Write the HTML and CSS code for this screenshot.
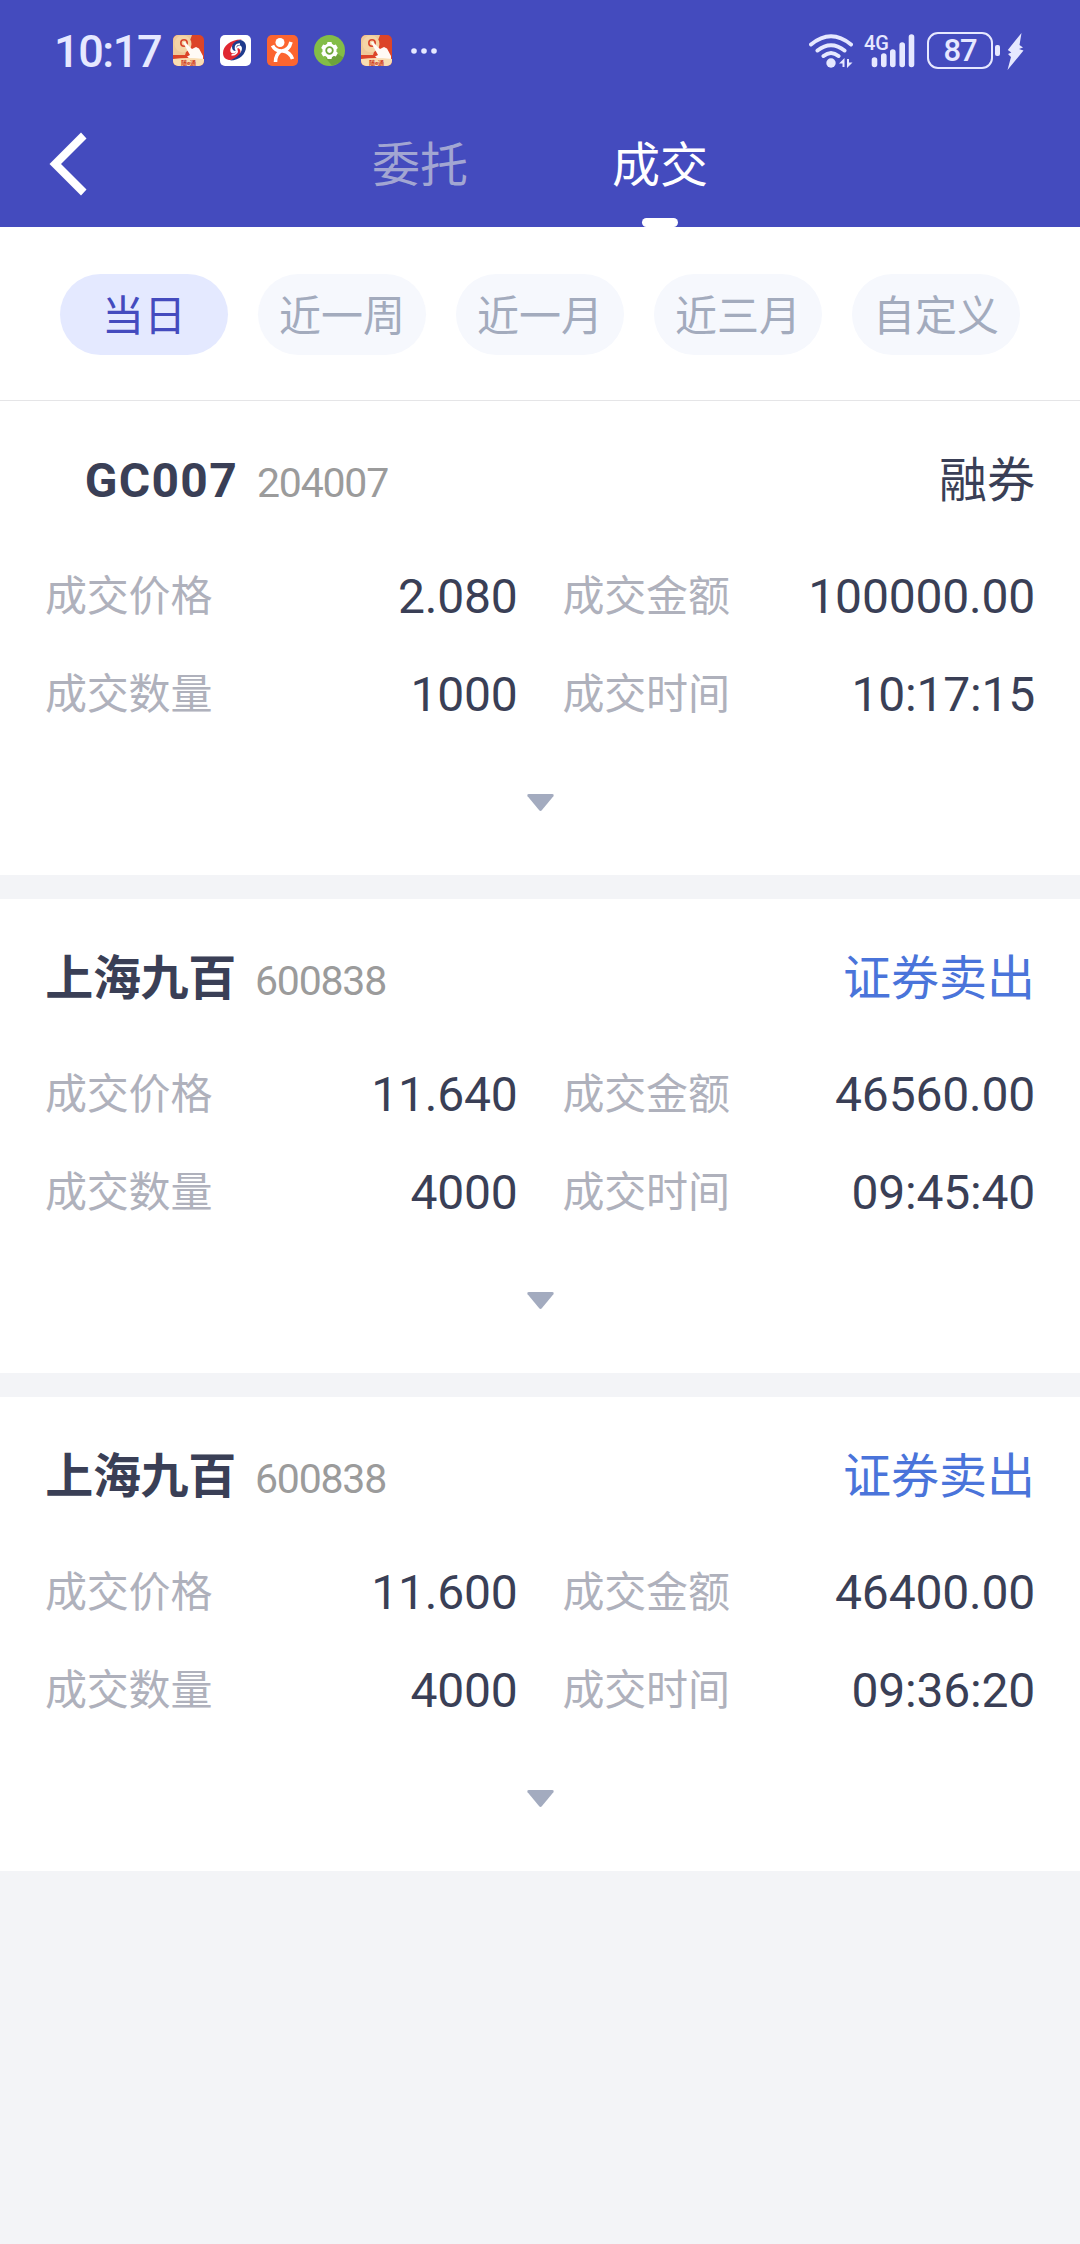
FILE: index.html
```html
<!DOCTYPE html>
<html lang="zh-CN">
<head>
  <meta charset="UTF-8" />
  <meta name="viewport" content="width=device-width, initial-scale=1.0" />
  <title>成交</title>
  <link rel="stylesheet" href="styles.css">
</head>
<body>
  <header class="header">
    <div class="status">
      <span class="time">10:17</span>
      <div class="apps">
        <svg width="31" height="31" viewBox="0 0 31 31">
          <g id="app-fund">
            <rect width="31" height="31" rx="5" fill="#dc4428" />
            <path d="M0 5a5 5 0 0 1 5-5h14l-3 8-4 12H0z" fill="#efc999" />
            <circle cx="10" cy="9" r="8.500" fill="#f4d4a6" />
            <circle cx="11" cy="8" r="3.200" fill="none" stroke="#d8452c" stroke-width="1.600" />
            <path d="M10 7.500q1.500-1.500 3 .5l6 6 4-2 3 1.500 4 7.500v3H17l-3-2.500 3-1.500z" fill="#fffaf5" />
            <path d="M0 24q15-2 31 0v2a5 5 0 0 1-5 5H5a5 5 0 0 1-5-5z" fill="#f9ddb2" />
            <text x="15.500" y="29.800" text-anchor="middle" font-size="6" font-weight="700" fill="#cf3f28">随e通</text>
          </g>
        </svg>
        <svg width="31" height="31" viewBox="0 0 31 31">
          <rect width="31" height="31" rx="5" fill="#fff" />
          <path d="M22 4.500C11 4 3 11 3 18c0 4.500 3 7 7.500 7 6 0 10-4 10-8 0-2.500-1.500-4-3-4 .5 4-3.500 6.500-6 5-3.500-3 1-10.500 10.500-13.500z" fill="#e02731" />
          <path d="M10 25.500c10 0 16-7 16-13.500 0-4-2-6.500-6-7-5 1-8 4-8 7 0 2.500 1.500 4 3.500 4 0-4 3-6.500 5.500-5 3 3-1 10.500-11 14.500z" fill="#1f3b8c" />
          <path d="M20 9c-5.500 0-5 4.500-3.500 6s0 5-5 5" fill="none" stroke="#fff" stroke-width="1.600" />
        </svg>
        <svg width="31" height="31" viewBox="0 0 31 31">
          <rect width="31" height="31" rx="5" fill="#fc6530" />
          <circle cx="13" cy="7.500" r="4.500" fill="#fff" />
          <path d="M5.500 10.500q2.500 5.500 9 5.500 7.500-.5 9.500-9M8.500 27q0-8 6-11.500M16 16q7 1 9.500 8" fill="none" stroke="#fff" stroke-width="3.600" />
        </svg>
        <svg width="31" height="31" viewBox="0 0 31 31">
          <circle cx="15.500" cy="15.500" r="15.500" fill="#83bd47" />
          <path d="M22 18l7.500 4.500A15.500 15.500 0 0 1 18 30.500l-6-7z" fill="#6da33b" />
          <g fill="#fff">
            <circle cx="15.500" cy="15.500" r="7" />
            <path id="tooth" d="M13.500 7h4l1 4h-6zM13.500 24h4l1-4h-6z" />
            <use href="#tooth" transform="rotate(60 15.500 15.500)" />
            <use href="#tooth" transform="rotate(120 15.500 15.500)" />
          </g>
          <circle cx="15.500" cy="15.500" r="3.300" fill="none" stroke="#6fa83c" stroke-width="1.800" />
        </svg>
        <svg width="31" height="31" viewBox="0 0 31 31"><use href="#app-fund" /></svg>
        <svg class="more" width="26" height="6" viewBox="0 0 26 6" fill="#e6e8ff">
          <circle cx="3" cy="3" r="2.800" /><circle cx="13" cy="3" r="2.800" /><circle cx="23" cy="3" r="2.800" />
        </svg>
      </div>
      <div class="system">
        <svg width="44" height="38" viewBox="0 0 44 38" fill="none" stroke="#e6e8ff" stroke-width="4" stroke-linecap="round">
          <path d="M2 12.500Q22-4 42 12.500M8.500 18.500q13.500-10.500 27 0M14.500 24q7.500-6 15 0" />
          <circle cx="22" cy="31" r="4.700" fill="#e6e8ff" stroke="none" />
          <path d="M30 31.500l5.500-5.500v9h-2v-3.500zM43.500 30.500L38 36v-9h2v3.500z" fill="#e6e8ff" stroke="none" />
        </svg>
        <svg class="signal" width="51" height="38" viewBox="0 0 51 38">
          <path d="M10.500 28v4.500M19.800 24v8.500M28.800 20v12.500M38.200 13v19.500M47.500 5v27.500" stroke="#e6e8ff" stroke-width="5.600" stroke-linecap="round" />
          <text x="0" y="18" font-size="21" font-weight="500" textLength="25" lengthAdjust="spacingAndGlyphs" fill="#e6e8ff">4G</text>
        </svg>
        <span class="battery">87</span>
        <i class="knob"></i>
        <svg width="17" height="38" viewBox="0 0 17 38">
          <path d="M14.500 1L.8 18l3.500 2.500L1 22l3 3-3.500 13L16.500 18.500 12 17l4-1.500-3.500-2.500z" fill="#e6e8ff" />
        </svg>
      </div>
    </div>
    <nav class="nav">
      <svg class="back" width="38" height="64" viewBox="0 0 38 64">
        <path d="M32 .5L.5 32 32 63.500l5.500-6L12 32 37.500 6.500z" fill="#fff" />
      </svg>
      <div class="tabs">
        <a class="tab">委托</a>
        <a class="tab active">成交</a>
      </div>
    </nav>
  </header>

  <div class="filters">
    <span class="pill active">当日</span>
    <span class="pill">近一周</span>
    <span class="pill">近一月</span>
    <span class="pill">近三月</span>
    <span class="pill">自定义</span>
  </div>

  <main class="list">
    <section class="card">
      <div class="card-head">
        <b class="name latin">GC007</b>
        <span class="code">204007</span>
        <span class="side">融券</span>
      </div>
      <div class="grid">
        <div class="cell"><label>成交价格</label><span>2.080</span></div>
        <div class="cell"><label>成交金额</label><span>100000.00</span></div>
        <div class="cell"><label>成交数量</label><span>1000</span></div>
        <div class="cell"><label>成交时间</label><span>10:17:15</span></div>
      </div>
      <div class="expand">
        <svg width="27" height="17" viewBox="0 0 27 17">
          <path id="arrow-down" d="M2 0h23q2.400 0 1.400 2.200L15 16q-1.500 1.800-3 0L.6 2.200Q-.4 0 2 0z" fill="#a3abbf" />
        </svg>
      </div>
    </section>

    <section class="card">
      <div class="card-head">
        <b class="name">上海九百</b>
        <span class="code">600838</span>
        <span class="side sell">证券卖出</span>
      </div>
      <div class="grid">
        <div class="cell"><label>成交价格</label><span>11.640</span></div>
        <div class="cell"><label>成交金额</label><span>46560.00</span></div>
        <div class="cell"><label>成交数量</label><span>4000</span></div>
        <div class="cell"><label>成交时间</label><span>09:45:40</span></div>
      </div>
      <div class="expand"><svg width="27" height="17" viewBox="0 0 27 17"><use href="#arrow-down" /></svg></div>
    </section>

    <section class="card">
      <div class="card-head">
        <b class="name">上海九百</b>
        <span class="code">600838</span>
        <span class="side sell">证券卖出</span>
      </div>
      <div class="grid">
        <div class="cell"><label>成交价格</label><span>11.600</span></div>
        <div class="cell"><label>成交金额</label><span>46400.00</span></div>
        <div class="cell"><label>成交数量</label><span>4000</span></div>
        <div class="cell"><label>成交时间</label><span>09:36:20</span></div>
      </div>
      <div class="expand"><svg width="27" height="17" viewBox="0 0 27 17"><use href="#arrow-down" /></svg></div>
    </section>
  </main>
</body>
</html>
```

FILE: styles.css
```css
* {
  box-sizing: border-box;
}
body {
  margin: 0;
  min-height: 2244px;
  background: #f3f4f7;
  font-family: Roboto, 'Noto Sans CJK SC', sans-serif;
  color: #3a3f56;
}
svg {
  display: block;
  flex: none;
}

/* header */
.header {
  height: 227px;
  background: #444bbe;
}
.status {
  display: flex;
  align-items: center;
  height: 101px;
  padding: 0 56px 0 54px;
  color: #e6e8ff;
}
.time {
  width: 119px;
  font-size: 45px;
  font-weight: 500;
  line-height: 60px;
  letter-spacing: -1.4px;
  padding-top: 2px;
}
.apps {
  display: flex;
  align-items: center;
  gap: 16px;
}
.more {
  margin-left: 3px;
}
.system {
  display: flex;
  align-items: center;
  margin-left: auto;
}
.signal {
  margin-left: 11px;
}
.battery {
  width: 66px;
  height: 37px;
  margin-left: 12px;
  border: 2.5px solid #e6e8ff;
  border-radius: 11px;
  font-size: 31px;
  font-weight: 500;
  line-height: 34px;
  letter-spacing: -1px;
  text-align: center;
}
.knob {
  width: 5px;
  height: 11px;
  margin: 0 7px 0 2px;
  border-radius: 2px;
  background: #e6e8ff;
}
.nav {
  display: flex;
  align-items: center;
  height: 126px;
  padding-left: 49px;
}
.tabs {
  display: flex;
  height: 100%;
  margin-left: 213px;
}
.tab {
  display: flex;
  flex-direction: column;
  align-items: center;
  width: 240px;
  padding-top: 35px;
  font-size: 48px;
  line-height: 60px;
  color: #a2a6d2;
}
.tab.active {
  color: #fff;
}
.tab.active::after {
  content: '';
  width: 36px;
  height: 9px;
  margin-top: auto;
  border-radius: 5px;
  background: #fff;
}

/* date filter */
.filters {
  display: flex;
  gap: 30px;
  height: 174px;
  padding: 47px 60px 0;
  background: #fff;
  border-bottom: 1px solid #e5e5e7;
}
.pill {
  width: 168px;
  height: 81px;
  border-radius: 41px;
  background: #f6f8fd;
  color: #a3abbd;
  font-size: 42px;
  line-height: 85px;
  text-align: center;
}
.pill.active {
  background: #e4e9ff;
  color: #444bbe;
}

/* deals */
.list {
  display: flex;
  flex-direction: column;
  gap: 24px;
}
.card {
  height: 474px;
  padding: 45px 45px 0;
  background: #fff;
}
.card-head {
  display: flex;
  align-items: baseline;
  line-height: 70px;
  font-size: 48px;
}
.name {
  min-width: 191px;
  text-align: right;
  letter-spacing: -0.3px;
}
.name.latin {
  min-width: 193px;
  letter-spacing: 1.3px;
}
.code {
  margin-left: 19px;
  font-size: 41px;
  letter-spacing: -1.2px;
  color: #9b9b9b;
}
.side {
  margin-left: auto;
}
.sell {
  color: #4a74da;
}
.grid {
  display: grid;
  grid-template-columns: 1fr 1fr;
  column-gap: 45px;
  grid-auto-rows: 98px;
  margin-top: 30px;
}
.cell {
  display: flex;
  align-items: center;
  justify-content: space-between;
  font-size: 48px;
}
.cell label {
  font-size: 42px;
  line-height: 60px;
  letter-spacing: -0.2px;
  color: #afb1bc;
}
.cell span {
  line-height: 60px;
  letter-spacing: -0.2px;
}
.expand {
  display: flex;
  justify-content: center;
  padding-top: 50px;
}
```
